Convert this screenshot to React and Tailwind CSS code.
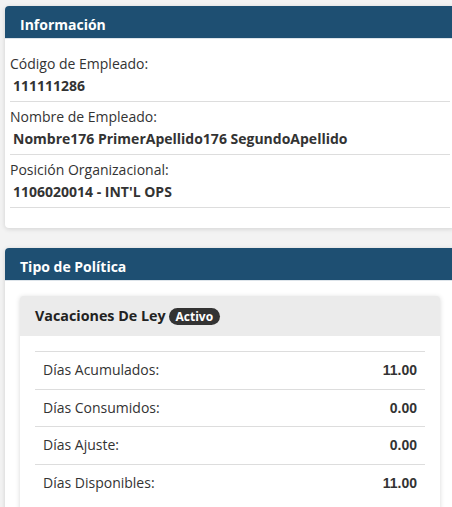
import React from 'react'

const EMPLOYEE = [
  { label: 'Código de Empleado:', value: '111111286' },
  { label: 'Nombre de Empleado:', value: 'Nombre176 PrimerApellido176 SegundoApellido' },
  { label: 'Posición Organizacional:', value: '1106020014 - INT\'L OPS' },
]

const DAYS = [
  { label: 'Días Acumulados:', value: '11.00' },
  { label: 'Días Consumidos:', value: '0.00' },
  { label: 'Días Ajuste:', value: '0.00' },
  { label: 'Días Disponibles:', value: '11.00' },
]

function Card({ title, children, className = '' }) {
  return (
    <div className={`w-[450px] ml-[5px] bg-white rounded-[4px] shadow-[0_1px_5px_rgba(0,0,0,0.14)] ${className}`}>
      <div className="h-[33px] bg-[#1e4f72] rounded-t-[4px] px-[15px] pt-[9px] text-[14px] leading-[20px] font-bold text-white border-b border-[#dde4ea]">
        {title}
      </div>
      {children}
    </div>
  )
}

export default function App() {
  return (
    <div className="w-[452px] h-[507px] overflow-hidden bg-[#f3f3f3] pt-[6px] text-[#333] font-['Open_Sans',sans-serif]">
      {/* Información */}
      <Card title="Información">
        <div className="px-[5px] pt-[10px] pb-[20px]">
          {EMPLOYEE.map(item => (
            <div key={item.label} className="pt-[5px] pb-[5px] border-b border-[#dddddd]">
              <div className="text-[14px] leading-[20px]">{item.label}</div>
              <div className="mt-[2px] pl-[3px] text-[14px] leading-[20px] font-bold whitespace-nowrap">{item.value}</div>
            </div>
          ))}
        </div>
      </Card>

      {/* Tipo de Política */}
      <Card title="Tipo de Política" className="mt-[20px]">
        <div className="px-[15px] pt-[15px] pb-[20px]">
          <div className="bg-white rounded-[3px] shadow-[0_1px_5px_rgba(0,0,0,0.16)]">
            <div className="h-[40px] bg-[#ebebeb] rounded-t-[3px] px-[15px] flex items-center">
              <span className="text-[14.3px] leading-[20px] font-bold text-[#222]">Vacaciones De Ley</span>
              <span className="ml-[3px] h-[17px] px-[7px] rounded-full bg-[#333] text-white text-[12px] leading-[17px] font-bold">Activo</span>
            </div>
            <div className="px-[15px] pt-[15px] pb-[10px]">
              {DAYS.map(row => (
                <div key={row.label} className="flex justify-between border-t border-[#dddddd] px-[8px] py-[8px] leading-[20.5px]">
                  <span className="text-[14px]">{row.label}</span>
                  <span className="text-[14px] font-bold font-['Liberation_Sans',Arial,sans-serif]">{row.value}</span>
                </div>
              ))}
            </div>
          </div>
        </div>
      </Card>
    </div>
  )
}
